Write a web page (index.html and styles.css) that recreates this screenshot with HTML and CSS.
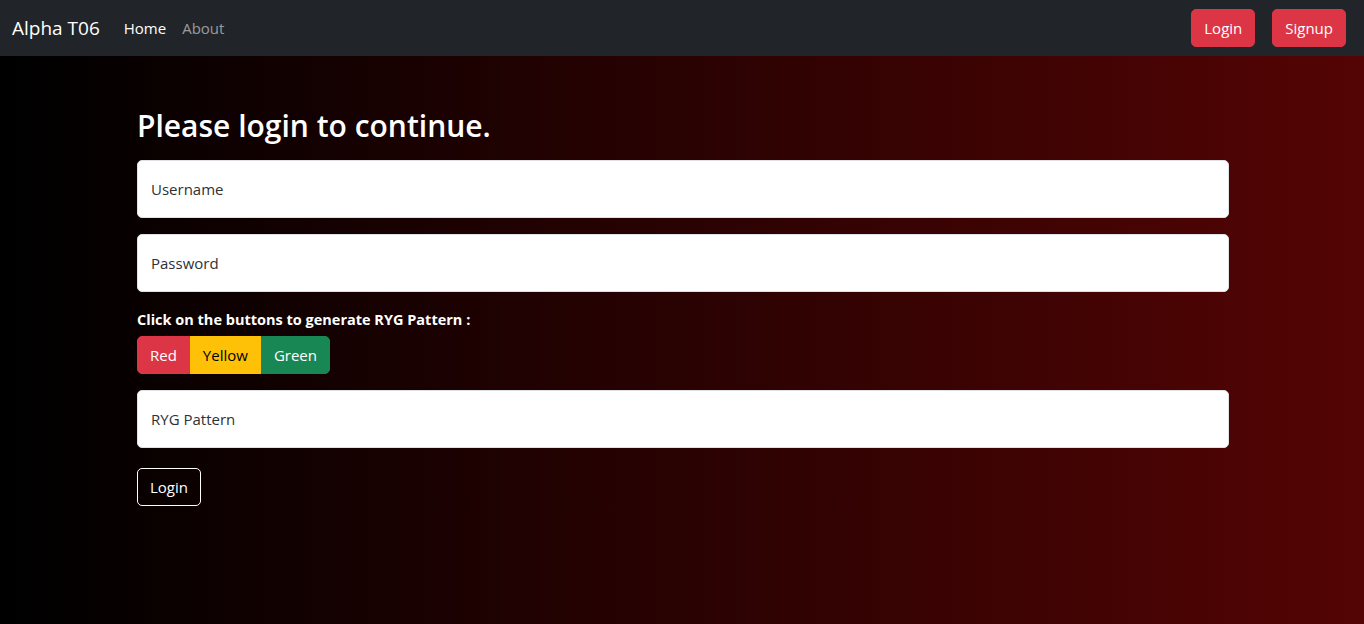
FILE: index.html
```html
<!DOCTYPE html>
<html lang="en">
<head>
<meta charset="utf-8">
<title>Alpha T06</title>
<link rel="stylesheet" href="styles.css">
</head>
<body>
<nav class="navbar">
  <div class="nav-left">
    <a class="brand" href="#">Alpha T06</a>
    <a class="nav-link active" href="#">Home</a>
    <a class="nav-link" href="#">About</a>
  </div>
  <div class="nav-right">
    <button class="btn btn-danger">Login</button>
    <button class="btn btn-danger">Signup</button>
  </div>
</nav>
<main class="page">
  <div class="container">
    <h2 class="title">Please login to continue.</h2>
    <input class="field" type="text" placeholder="Username">
    <input class="field" type="password" placeholder="Password">
    <div class="ryg-label">Click on the buttons to generate RYG Pattern :</div>
    <div class="btn-group">
      <button class="btn btn-danger">Red</button>
      <button class="btn btn-warning">Yellow</button>
      <button class="btn btn-success">Green</button>
    </div>
    <input class="field field-last" type="text" placeholder="RYG Pattern">
    <button class="btn btn-outline">Login</button>
  </div>
</main>
</body>
</html>
```
FILE: styles.css
```css
* { box-sizing: border-box; }
html, body { margin: 0; height: 100%; }
body {
  font-family: "Open Sans", "Noto Sans", sans-serif;
  font-size: 15px;
  line-height: 1.5;
  color: #212529;
  display: flex;
  flex-direction: column;
}
.navbar {
  height: 56px;
  background: #212529;
  display: flex;
  align-items: center;
  justify-content: space-between;
  padding: 0 18px 0 12px;
  flex: none;
}
.nav-left { display: flex; align-items: center; }
.brand {
  color: #fff;
  font-size: 19px;
  text-decoration: none;
  margin-right: 16px;
  line-height: 30px;
}
.nav-link {
  color: rgba(255,255,255,.55);
  text-decoration: none;
  padding: 8px;
  line-height: 24px;
}
.nav-link.active { color: #fff; }
.nav-right { display: flex; gap: 17px; }
.btn {
  font-family: inherit;
  font-size: 15px;
  line-height: 24px;
  padding: 6px 12px;
  border: 1px solid transparent;
  border-radius: 5px;
  cursor: pointer;
}
.btn-danger { background: #dc3545; color: #fff; border-color: #dc3545; }
.btn-warning { background: #ffc107; color: #000; border-color: #ffc107; }
.btn-success { background: #198754; color: #fff; border-color: #198754; }
.btn-outline { background: transparent; color: #fff; border-color: #fff; }
.page {
  flex: 1;
  background: linear-gradient(to right, #000 0%, #540404 100%);
  padding-top: 51px;
}
.container {
  width: 1092px;
  margin-left: calc(50% - 545px);
  display: flex;
  flex-direction: column;
  align-items: flex-start;
}
.title {
  color: #fff;
  font-size: 30px;
  font-weight: 600;
  line-height: 38px;
  margin: 0 0 15px;
}
.field {
  width: 100%;
  height: 58px;
  padding: 0 13px;
  border: 1px solid #dee2e6;
  border-radius: 5px;
  font-family: inherit;
  font-size: 15px;
  color: #212529;
  background: #fff;
  margin-bottom: 16px;
}
.field::placeholder { color: #2d3136; }
.field-last { margin-bottom: 20px; }
.ryg-label {
  color: #fff;
  font-weight: 700;
  font-size: 14.5px;
  line-height: 24px;
  margin-bottom: 4px;
}
.btn-group { display: flex; margin-bottom: 16px; }
.btn-group .btn { border-radius: 0; }
.btn-group .btn:first-child { border-radius: 5px 0 0 5px; }
.btn-group .btn:last-child { border-radius: 0 5px 5px 0; }
```
